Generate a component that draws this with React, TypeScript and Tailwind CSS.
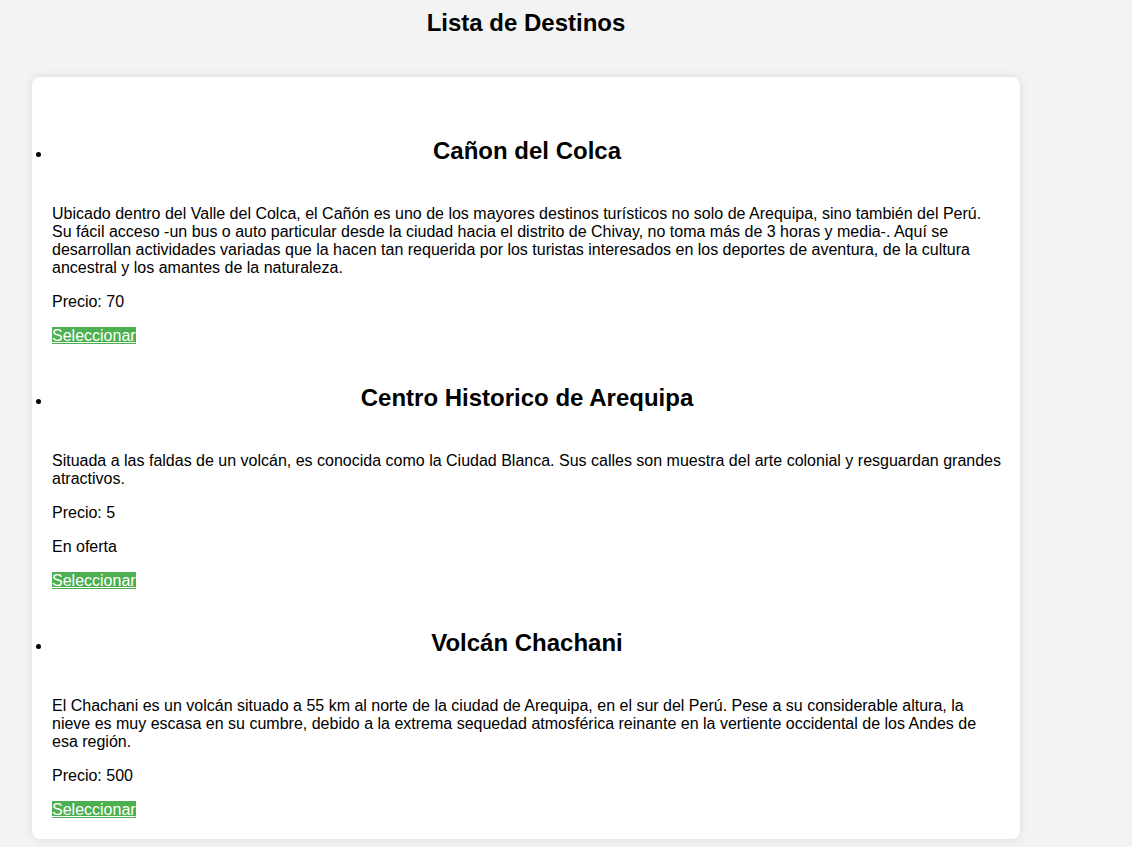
const destinos = [
  {
    nombre: 'Cañon del Colca',
    descripcion:
      'Ubicado dentro del Valle del Colca, el Cañón es uno de los mayores destinos turísticos no solo de Arequipa, sino también del Perú. Su fácil acceso -un bus o auto particular desde la ciudad hacia el distrito de Chivay, no toma más de 3 horas y media-. Aquí se desarrollan actividades variadas que la hacen tan requerida por los turistas interesados en los deportes de aventura, de la cultura ancestral y los amantes de la naturaleza.',
    precio: 70,
    oferta: false,
  },
  {
    nombre: 'Centro Historico de Arequipa',
    descripcion:
      'Situada a las faldas de un volcán, es conocida como la Ciudad Blanca. Sus calles son muestra del arte colonial y resguardan grandes atractivos.',
    precio: 5,
    oferta: true,
  },
  {
    nombre: 'Volcán Chachani',
    descripcion:
      'El Chachani es un volcán situado a 55 km al norte de la ciudad de Arequipa, en el sur del Perú. Pese a su considerable altura, la nieve es muy escasa en su cumbre, debido a la extrema sequedad atmosférica reinante en la vertiente occidental de los Andes de esa región.',
    precio: 500,
    oferta: false,
  },
];

const App = () => {
  return (
    <div className="min-h-screen bg-[#f3f3f3] font-['Liberation_Sans',Arial,sans-serif] text-black">
      <div className="ml-8 w-[988px] pt-[9px]">
        <h1 className="text-center text-[24px] font-bold leading-[normal]">Lista de Destinos</h1>

        <ul className="mt-10 list-disc rounded-lg bg-white pt-[60px] pr-[18px] pb-5 pl-5 shadow-[0_0_10px_rgba(0,0,0,0.1)]">
          {destinos.map((d, i) => (
            <li key={d.nombre} className={i < destinos.length - 1 ? 'mb-[39px]' : ''}>
              <h2 className="mb-10 text-center text-[24px] font-bold leading-[normal]">{d.nombre}</h2>
              <p className="mb-4 text-base leading-[normal]">{d.descripcion}</p>
              <p className="mb-4 text-base leading-[normal]">Precio: {d.precio}</p>
              {d.oferta && <p className="mb-4 text-base leading-[normal]">En oferta</p>}
              <p className="text-base leading-[normal]">
                <a href="#" className="bg-[#4caf50] text-white underline">
                  Seleccionar
                </a>
              </p>
            </li>
          ))}
        </ul>
      </div>
    </div>
  );
};

export default App;
